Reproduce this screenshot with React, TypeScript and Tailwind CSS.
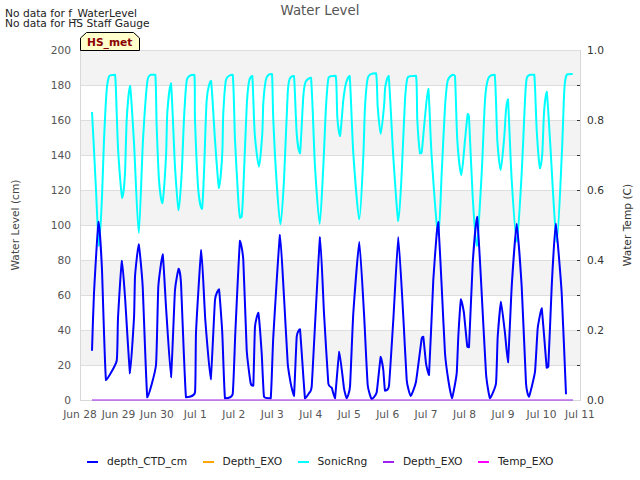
const cyan = "92,112 94,150 96,190 99,246 102,197 104,140 106.7,90 109.3,76 115,74.7 116.7,113 118.3,153 122.3,198 125,173 126.7,120 130,85.7 134,143 138.7,232.7 143,140 147.3,81.7 150.7,74.7 155.3,74.7 156.7,126.7 159,180 162.3,203.3 166,156.7 167.3,113 171,83.3 175,166.7 178.7,210 181.7,173 184.3,113 187,79.3 194.3,74.7 195,120 198.3,190 202,209 204,173 206.7,100 211,80.7 215,140 219,188 222.3,153 223.3,113 226,80 232.7,74.7 235,140 238.3,200 240,217.7 241.7,216.7 243.3,190 246.7,106.7 249,81.7 252.3,76 254.7,133.3 259,166.7 262.3,133.3 263.3,103.3 265.7,80.7 268.3,75 272,74 273.3,120 276.7,183.3 280.3,224 284,180 287.7,93.3 290,78.3 294,76 296.7,133.3 300,153.3 303.3,96.7 305.7,81.7 311,77.7 315,166.7 319.7,224 323.3,166.7 326,106.7 328.7,77.3 335.7,75.7 337.3,116.7 340,136 343.3,100 346,83.3 349.7,76 353.3,153.3 359.3,219.3 363.3,156.7 365,106.7 368,77.3 376,73.3 377.7,106.7 380.7,134 384,106.7 385.3,86.7 388.7,76 393.3,156.7 398.3,221 401.7,173 405,100 407.7,77.3 416,75.7 417.3,120 420,153.3 421.7,152.7 424.7,120 428.3,88.7 431.7,156.7 438.3,235 441.7,173 445,106.7 447.7,80.7 452.7,74.7 455,76 457.3,140 461.3,175 465,140 467.7,114 469,116.7 472.7,196.7 476.7,246 481.7,173 485,100 488.3,78.3 494.7,74.7 497.3,140 500.7,170 504,140 506,110 508,99.3 511.7,180 516.7,241.7 521.7,173 525,100 526.7,78.3 530,74.7 534.3,74.7 536.7,130 540,168.3 542.3,153.3 544,113 546.7,91.7 550,140 556.7,241.7 561.7,156.7 564.3,90 566.7,74.7 572.7,74";
const blue = "92,350.7 94,293 98.7,221.7 102,270 106,380 116.7,360.7 118,318 122,260.7 125,296.7 130,373.3 134,318 135,276.7 138.7,244.3 142.7,286.7 147.3,397.3 156,365 158.3,286.7 162.7,254.3 166,306.7 171,377.3 175,290 178.7,268.7 181,283.3 186,397.3 195,392.3 196,333 201.3,250 205.3,320 210.7,379.3 215,300 219,289.3 222.3,333.3 225,398.3 232.7,394 235.3,333.3 240,240.7 243.3,260 246.7,350 250.7,383.3 253.3,385.7 255,326.7 258.3,312.7 261.7,353.3 264,396.7 270.7,398.3 273.3,336.7 280,235 284,296.7 287.7,363.3 290.7,383.3 294,396 296.7,336.7 300,329.3 305,398.3 309.3,392.7 311.7,386.7 320,237.3 324,313.3 328.3,383.3 331.7,387.7 335,398.3 339.3,351.7 344,388.3 346.7,398.3 350,386.7 353.3,313.3 359.3,241.7 364,313.3 367.7,385 371.7,399 376.7,392.3 380.7,356.7 383.3,370 385,390.7 389,385.7 393.3,320 398.3,237.3 403.3,316.7 406.7,380 410.7,396 416,381.7 421.7,338.3 423.3,336.7 426,363.3 429,375 433.3,280 436.7,233.3 438.3,222 441.7,286.7 445,353.3 448.3,380 452,398.3 456.7,373.3 458.3,336.7 461,299.3 464,313.3 467.3,346.7 469,347.3 472.7,263.3 477,216.7 481,280 486,373.3 490,398.3 496,383.3 497.7,336.7 501,301.7 505,333.3 508,362.3 511.7,286.7 516.7,223.7 521.7,286.7 526,383.3 529,396.7 535,371.7 537.7,328.3 541.7,308.3 546.7,367.7 548.3,366.7 551.7,286.7 555.7,223.7 561.7,293.3 566,394.3";

function smooth(src: string, k: number) {
  const p = src.split(" ").map((s) => s.split(",").map(Number));
  let d = `M${p[0][0]} ${p[0][1]}`;
  for (let i = 0; i < p.length - 1; i++) {
    const a = p[Math.max(i - 1, 0)];
    const b = p[i];
    const c = p[i + 1];
    const e = p[Math.min(i + 2, p.length - 1)];
    const lo = Math.min(b[1], c[1]);
    const hi = Math.max(b[1], c[1]);
    const clamp = (v: number) => Math.min(hi, Math.max(lo, v));
    const c1x = b[0] + (c[0] - a[0]) / k;
    const c1y = clamp(b[1] + (c[1] - a[1]) / k);
    const c2x = c[0] - (e[0] - b[0]) / k;
    const c2y = clamp(c[1] - (e[1] - b[1]) / k);
    d += ` C${c1x.toFixed(1)} ${c1y.toFixed(1)} ${c2x.toFixed(1)} ${c2y.toFixed(1)} ${c[0]} ${c[1]}`;
  }
  return d;
}

const bands = [50, 120, 190, 260, 330];
const grid = [50, 85, 120, 155, 190, 225, 260, 295, 330, 365];
const leftLabels = ["200", "180", "160", "140", "120", "100", "80", "60", "40", "20", "0"];
const rightLabels = ["1.0", "0.8", "0.6", "0.4", "0.2", "0.0"];
const dates = ["Jun 28", "Jun 29", "Jun 30", "Jul 1", "Jul 2", "Jul 3", "Jul 4", "Jul 5", "Jul 6", "Jul 7", "Jul 8", "Jul 9", "Jul 10", "Jul 11"];
const legend = [
  { label: "depth_CTD_cm", cls: "bg-[#0000ff]" },
  { label: "Depth_EXO", cls: "bg-[#ffa500]" },
  { label: "SonicRng", cls: "bg-[#00ffff]" },
  { label: "Depth_EXO", cls: "bg-[#a020f0]" },
  { label: "Temp_EXO", cls: "bg-[#ff00ff]" },
];

export default function App() {
  return (
    <div className="relative w-[640px] h-[480px] bg-white overflow-hidden font-['DejaVu_Sans',sans-serif]">
      <div className="absolute left-[5px] top-[9px] text-[10.67px] leading-[10px] text-[#222]">
        <div>No data for f_WaterLevel</div>
        <div>No data for HS Staff Gauge</div>
      </div>
      <div className="h-[22px] pt-[3px] text-center text-[13.33px] leading-[16px] text-[#555]">Water Level</div>
      <svg width="640" height="428" viewBox="0 22 640 428" className="block" fontFamily="'DejaVu Sans', sans-serif" fontSize="10.67">
        {bands.map((y) => (
          <rect key={y} x="80" y={y} width="500" height="35" fill="#f3f3f3" />
        ))}
        {grid.map((y) => (
          <line key={y} x1="80" x2="580" y1={y + 0.5} y2={y + 0.5} stroke="#dddddd" strokeWidth="1" />
        ))}
        <line x1="80.5" x2="80.5" y1="50" y2="401" stroke="#d8d8d8" />
        <line x1="580.5" x2="580.5" y1="50" y2="401" stroke="#d8d8d8" />
        <line x1="80" x2="581" y1="400.5" y2="400.5" stroke="#d8d8d8" />
        {[85, 120, 155, 190, 225, 260, 295, 330, 365].map((y) => (
          <line key={y} x1="577" x2="580" y1={y + 0.5} y2={y + 0.5} stroke="#333" />
        ))}
        <path d={smooth(cyan, 8)} fill="none" stroke="#00ffff" strokeWidth="2" strokeLinejoin="round" />
        <path d={smooth(blue, 14)} fill="none" stroke="#0000ff" strokeWidth="2" strokeLinejoin="round" />
        <line x1="92" x2="573" y1="400" y2="400" stroke="#a020f0" strokeWidth="1.2" />
        {leftLabels.map((t, i) => (
          <text key={t} x="71" y={53.5 + i * 35} textAnchor="end" fill="#555">{t}</text>
        ))}
        {rightLabels.map((t, i) => (
          <text key={t} x="587" y={53.5 + i * 70} fill="#333">{t}</text>
        ))}
        {dates.map((t, i) => (
          <text key={t} x={80 + i * 38.46} y="418" textAnchor="middle" fill="#555">{t}</text>
        ))}
        <text transform="translate(19 225) rotate(-90)" textAnchor="middle" fill="#444">Water Level (cm)</text>
        <text transform="translate(631 225) rotate(-90)" textAnchor="middle" fill="#333">Water Temp (C)</text>
        <path d="M80.5 50.5 V38 L86.5 32.5 H133.5 L139.5 38 V50.5 Z" fill="#ffffcc" stroke="#000" strokeWidth="1" />
        <text x="87" y="46" fontWeight="700" fill="#8b0000">HS_met</text>
      </svg>
      <div className="flex items-center gap-[15.5px] pl-[87px] mt-[3px] text-[10.67px] leading-[18px] text-[#222]">
        {legend.map((item, i) => (
          <div key={i} className="flex items-center gap-[9px]">
            <span className={`block w-[11px] h-[2px] ${item.cls}`} />
            <span>{item.label}</span>
          </div>
        ))}
      </div>
    </div>
  );
}
